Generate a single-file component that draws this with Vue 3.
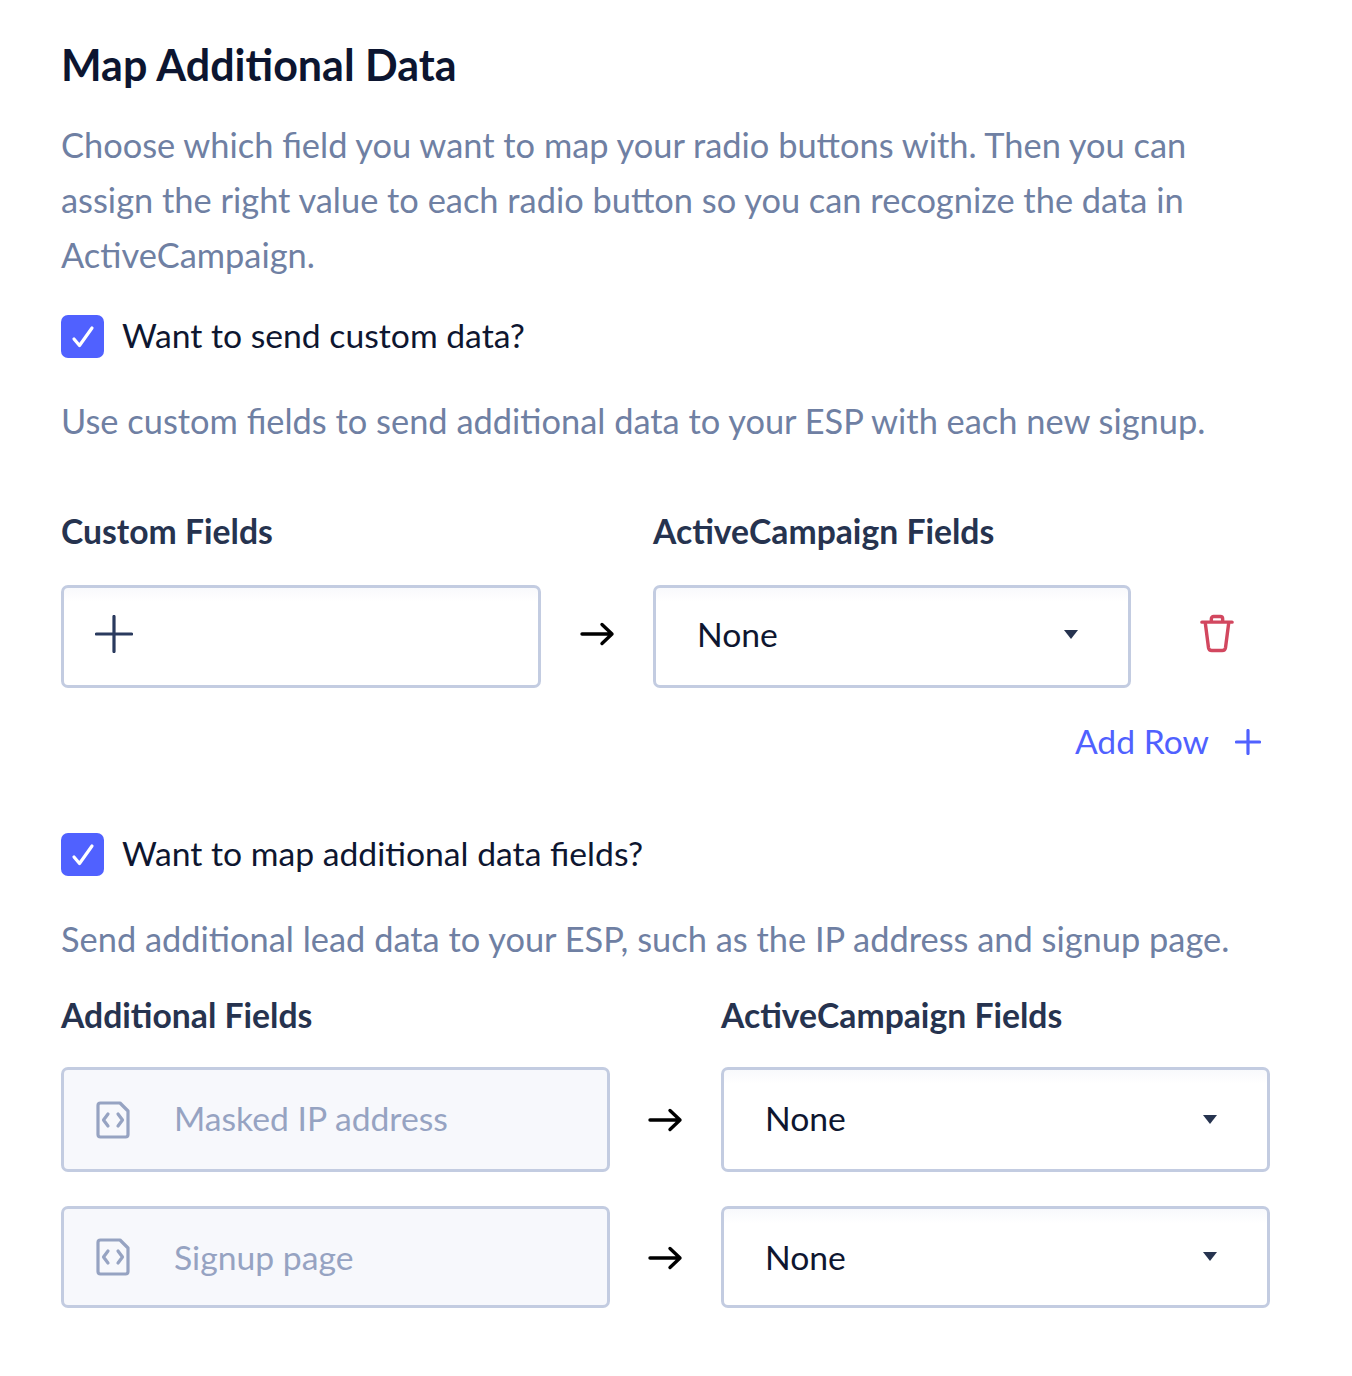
<template>
  <div class="page">
    <h2 class="title">Map Additional Data</h2>
    <p class="desc intro">
      Choose which field you want to map your radio buttons with. Then you can<br />
      assign the right value to each radio button so you can recognize the data in<br />
      ActiveCampaign.
    </p>

    <label class="check first-check">
      <span class="box">
        <svg width="24" height="24" viewBox="0 0 24 24"><path d="M3 14 L8.500 20.500 L21 3" fill="none" stroke="#fff" stroke-width="3.200" stroke-linecap="round" stroke-linejoin="round" /></svg>
      </span>
      <span class="check-label">Want to send custom data?</span>
    </label>
    <p class="desc sub-first">Use custom fields to send additional data to your ESP with each new signup.</p>

    <div class="heads custom-heads">
      <div class="head custom-col">Custom Fields</div>
      <div class="head">ActiveCampaign Fields</div>
    </div>
    <div class="row custom-row">
      <div class="field custom-col">
        <svg class="plus" width="38" height="38" viewBox="0 0 38 38"><path d="M19 1.500 V36.500 M1.500 19 H36.500" stroke="#2a3a5e" stroke-width="3.200" stroke-linecap="round" /></svg>
      </div>
      <div class="arrow">
        <svg width="35" height="26" viewBox="0 0 35 26"><path d="M2 13 H32 M22 3.500 L32 13 L22 22.500" fill="none" stroke="#000" stroke-width="3.400" stroke-linecap="round" stroke-linejoin="round" /></svg>
      </div>
      <div class="field select custom-select">
        <span class="value">None</span>
        <i class="caret"></i>
      </div>
      <button class="trash" type="button">
        <svg width="34" height="39" viewBox="0 0 36 40"><path d="M2 8 H34 M12 8 V4.500 Q12 2 14.500 2 H21.500 Q24 2 24 4.500 V8 M5.500 8 L9 35 Q9.500 38 12.500 38 H23.500 Q26.500 38 27 35 L30.500 8" fill="none" stroke="#d2475f" stroke-width="3.600" stroke-linecap="round" stroke-linejoin="round" /></svg>
      </button>
    </div>
    <div class="add-row">
      <span>Add Row</span>
      <svg class="add-plus" width="26" height="26" viewBox="0 0 26 26"><path d="M13 1.500 V24.500 M1.500 13 H24.500" stroke="#5061ff" stroke-width="3.200" stroke-linecap="round" /></svg>
    </div>

    <label class="check second-check">
      <span class="box">
        <svg width="24" height="24" viewBox="0 0 24 24"><path d="M3 14 L8.500 20.500 L21 3" fill="none" stroke="#fff" stroke-width="3.200" stroke-linecap="round" stroke-linejoin="round" /></svg>
      </span>
      <span class="check-label">Want to map additional data fields?</span>
    </label>
    <p class="desc sub-second">Send additional lead data to your ESP, such as the IP address and signup page.</p>

    <div class="heads additional-heads">
      <div class="head add-col">Additional Fields</div>
      <div class="head">ActiveCampaign Fields</div>
    </div>
    <div v-for="item in additional" :key="item.label" class="row add-row-item" :class="item.cls">
      <div class="field add-col locked">
        <svg class="code" width="34" height="38" viewBox="0 0 34 38"><path d="M4.500 2 H24 L32 10 V33.500 Q32 36 29.500 36 H4.500 Q2 36 2 33.500 V4.500 Q2 2 4.500 2 Z" fill="none" stroke="#96a3c2" stroke-width="3.200" stroke-linejoin="round" /><path d="M12 13 L7.500 19 L12 25 M22 13 L26.500 19 L22 25" fill="none" stroke="#96a3c2" stroke-width="3.200" stroke-linecap="round" stroke-linejoin="round" /></svg>
        <span class="value">{{ item.label }}</span>
      </div>
      <div class="arrow">
        <svg width="35" height="26" viewBox="0 0 35 26"><path d="M2 13 H32 M22 3.500 L32 13 L22 22.500" fill="none" stroke="#000" stroke-width="3.400" stroke-linecap="round" stroke-linejoin="round" /></svg>
      </div>
      <div class="field select add-select">
        <span class="value">None</span>
        <i class="caret"></i>
      </div>
    </div>
  </div>
</template>

<script setup>
const additional = [
  { label: 'Masked IP address', cls: 'tall' },
  { label: 'Signup page', cls: 'short' }
]
</script>

<style>
html,
body {
  background: #fff;
}
</style>

<style scoped>
.page {
  box-sizing: border-box;
  width: 1352px;
  height: 1376px;
  padding: 39px 0 0 61px;
  font-family: Lato, "Liberation Sans", sans-serif;
  color: #0e1630;
  overflow: hidden;
}
.title {
  margin: 0;
  font-size: 43px;
  line-height: 52px;
  font-weight: 700;
  color: #0c1530;
}
.desc {
  margin: 0;
  font-size: 34.400px;
  line-height: 55px;
  color: #6f80a3;
}
.intro {
  margin-top: 26px;
}
.check {
  display: flex;
  align-items: center;
  gap: 18px;
  height: 43px;
  font-size: 33.700px;
  line-height: 43px;
}
.check-label {
  margin-bottom: 2px;
}
.first-check {
  margin-top: 33px;
}
.second-check {
  margin-top: 70px;
}
.box {
  display: flex;
  align-items: center;
  justify-content: center;
  width: 43px;
  height: 43px;
  border-radius: 7px;
  background: #5061ff;
  flex: none;
}
.sub-first {
  margin-top: 35px;
}
.sub-second {
  margin-top: 35px;
}
.heads {
  display: flex;
}
.custom-heads {
  margin-top: 61px;
}
.additional-heads {
  margin-top: 27px;
}
.head {
  font-size: 33.700px;
  line-height: 44px;
  font-weight: 700;
  color: #26334f;
}
.heads .custom-col {
  width: 592px;
}
.heads .add-col {
  width: 660px;
}
.row {
  display: flex;
  align-items: center;
}
.custom-row {
  margin-top: 32px;
  height: 103px;
}
.field {
  box-sizing: border-box;
  display: flex;
  align-items: center;
  height: 100%;
  border: 3px solid #c3cce1;
  border-radius: 7px;
  background: linear-gradient(#f8f9fc, #fff 14px);
}
.row .custom-col {
  width: 480px;
  padding-left: 31px;
}
.custom-row .plus {
  margin-bottom: 6px;
}
.arrow {
  display: flex;
  justify-content: center;
  flex: none;
}
.custom-row .arrow {
  width: 112px;
  margin-bottom: 6px;
}
.select {
  justify-content: space-between;
  font-size: 33.700px;
  color: #0e1630;
  padding: 0 50px 0 41px;
}
.custom-select {
  width: 478px;
}
.custom-select .value {
  margin-bottom: 6px;
}
.custom-select .caret {
  margin-bottom: 4px;
}
.caret {
  width: 0;
  height: 0;
  border-left: 7px solid transparent;
  border-right: 7px solid transparent;
  border-top: 9px solid #26334f;
}
.trash {
  margin: 0 0 6px 69px;
  padding: 0;
  border: 0;
  background: none;
  display: flex;
}
.add-row {
  display: flex;
  justify-content: flex-end;
  align-items: center;
  gap: 26px;
  width: 1200px;
  margin-top: 31px;
  height: 44px;
  font-size: 33.700px;
  color: #5061ff;
}
.add-plus {
  margin-top: 2px;
}
.row .add-col {
  width: 549px;
  padding-left: 32px;
  gap: 44px;
  font-size: 33.700px;
  color: #96a3c2;
  background: #f7f8fc;
}
.row .add-col .code {
  flex: none;
}
.add-row-item .arrow {
  width: 111px;
}
.add-select {
  width: 549px;
  padding-right: 50px;
}
.tall {
  margin-top: 30px;
  height: 105px;
}
.tall .value {
  margin-bottom: 3px;
}
.short {
  margin-top: 34px;
  height: 102px;
}
.short .arrow {
  margin-top: 2px;
}
.short .caret {
  margin-bottom: 2px;
}
</style>
